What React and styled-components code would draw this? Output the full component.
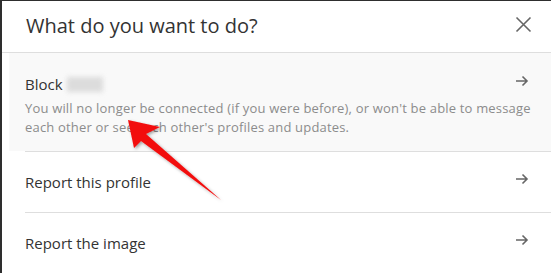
import React from "react";
import styled, { createGlobalStyle } from "styled-components";

const GlobalStyle = createGlobalStyle`
  html, body {
    margin: 0;
    padding: 0;
    background: #ffffff;
  }
  * {
    box-sizing: border-box;
  }
`;

const ArrowRight = () => (
  <svg width="14" height="12" viewBox="0 0 14 12" fill="none">
    <path d="M1 6h11M7.5 1.5L12 6l-4.5 4.5" stroke="#666" strokeWidth="1.6" />
  </svg>
);

const CloseIcon = () => (
  <svg width="17" height="17" viewBox="0 0 17 17" fill="none">
    <path d="M1.5 1.5l14 14M15.5 1.5l-14 14" stroke="#666" strokeWidth="1.6" />
  </svg>
);

const App = () => {
  return (
    <Frame>
      <GlobalStyle />
      <Modal>
        <Header>
          <Title>What do you want to do?</Title>
          <CloseButton>
            <CloseIcon />
          </CloseButton>
        </Header>
        <OptionList>
          <BlockOption>
            <OptionTop>
              <OptionLabel>
                Block <BlurredName />
              </OptionLabel>
              <ArrowBox>
                <ArrowRight />
              </ArrowBox>
            </OptionTop>
            <Description>
              You will no longer be connected (if you were before), or won't be able to message
              <br />
              each other or see each other's profiles and updates.
            </Description>
          </BlockOption>
          <Option>
            <OptionLabel>Report this profile</OptionLabel>
            <ArrowBox>
              <ArrowRight />
            </ArrowBox>
          </Option>
          <Option isLast>
            <OptionLabel>Report the image</OptionLabel>
            <ArrowBox>
              <ArrowRight />
            </ArrowBox>
          </Option>
        </OptionList>
      </Modal>
      <Pointer width="551" height="273" viewBox="0 0 551 273">
        <defs>
          <filter id="shadow" x="-20%" y="-20%" width="140%" height="140%">
            <feDropShadow dx="1.5" dy="1.5" stdDeviation="1.5" floodColor="#000" floodOpacity="0.35" />
          </filter>
        </defs>
        <polygon
          points="128,120 134,148 141,141 221,200 146,134 160,127"
          fill="#f20c0c"
          filter="url(#shadow)"
        />
      </Pointer>
    </Frame>
  );
};

export default App;

const Frame = styled.div`
  position: relative;
  width: 551px;
  height: 273px;
  overflow: hidden;
  border-top: 1px solid #2e2e2e;
  border-left: 2px solid #2e2e2e;
  background: #ffffff;
  font-family: "Open Sans", "Noto Sans", sans-serif;
`;

const Modal = styled.div`
  display: flex;
  flex-direction: column;
  width: 100%;
`;

const Header = styled.div`
  height: 52px;
  display: flex;
  align-items: center;
  justify-content: space-between;
  padding: 0 19px 0 24px;
  border-bottom: 1px solid #dedede;
`;

const Title = styled.h2`
  margin: 0;
  font-size: 20px;
  font-weight: 400;
  color: #333333;
  padding-bottom: 2px;
`;

const CloseButton = styled.div`
  display: flex;
  align-items: center;
  margin-top: -4px;
`;

const OptionList = styled.div`
  display: flex;
  flex-direction: column;
`;

const BlockOption = styled.div`
  margin-left: 7px;
  height: 98px;
  padding: 16px 22px 0 16px;
  background: #f9f9f9;
  display: flex;
  flex-direction: column;
`;

const OptionTop = styled.div`
  display: flex;
  justify-content: space-between;
  align-items: center;
  height: 30px;
`;

const OptionLabel = styled.div`
  font-size: 15px;
  color: #333333;
  display: flex;
  align-items: center;
`;

const BlurredName = styled.span`
  display: inline-block;
  width: 36px;
  height: 15px;
  margin-left: 4px;
  background: #dcdcdc;
  filter: blur(2.5px);
`;

const ArrowBox = styled.div`
  display: flex;
  align-items: center;
  margin-top: -6px;
`;

const Description = styled.div`
  font-size: 13px;
  line-height: 19px;
  color: #8c8c8c;
  white-space: nowrap;
  letter-spacing: 0.18px;
`;

const Option = styled.div`
  margin-left: 23px;
  height: ${({ isLast }) => (isLast ? "60px" : "61px")};
  padding: 0 22px 0 0;
  display: flex;
  justify-content: space-between;
  align-items: center;
  border-top: 1px solid #dedede;
`;

const Pointer = styled.svg`
  position: absolute;
  left: -2px;
  top: -1px;
  pointer-events: none;
`;
